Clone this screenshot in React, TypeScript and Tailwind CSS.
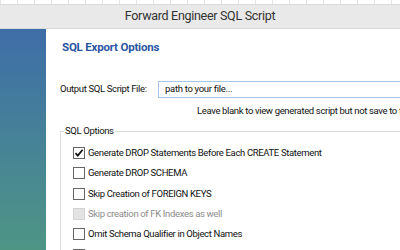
import React from 'react';

const font = { fontFamily: 'Roboto, "Noto Sans", sans-serif' };

const options = [
  { label: 'Generate DROP Statements Before Each CREATE Statement', checked: true },
  { label: 'Generate DROP SCHEMA' },
  { label: 'Skip Creation of FOREIGN KEYS' },
  { label: 'Skip creation of FK Indexes as well', disabled: true },
  { label: 'Omit Schema Qualifier in Object Names' },
  { label: 'Generate USE statements' },
];

const CheckRow = ({ label, checked, disabled }: { label: string; checked?: boolean; disabled?: boolean }) => (
  <div className="flex items-center h-[20.3px] gap-[3px]">
    <div
      className={
        disabled
          ? 'w-[12px] h-[12px] border border-[#d4d4d4] bg-[#e3e3e3] flex items-center justify-center'
          : 'w-[12px] h-[12px] border border-[#666] bg-white flex items-center justify-center'
      }
    >
      {checked && (
        <svg width="10" height="10" viewBox="0 0 10 10">
          <path d="M1.5 5.2 L3.8 7.6 L8.6 1.8" stroke="#111" strokeWidth="1.7" fill="none" />
        </svg>
      )}
    </div>
    <span
      className={
        disabled
          ? 'text-[9.5px] tracking-[-0.35px] text-[#8c8c8c] whitespace-nowrap'
          : 'text-[9.5px] tracking-[-0.35px] text-[#111] whitespace-nowrap'
      }
    >
      {label}
    </span>
  </div>
);

export default function App() {
  return (
    <div className="w-[400px] h-[250px] overflow-hidden flex flex-col bg-white" style={font}>
      {/* ruler-ish strip at very top */}
      <div className="h-[4px] bg-white bg-[repeating-linear-gradient(90deg,#e4e4e4_0px,#e4e4e4_1px,transparent_1px,transparent_17px)]" />
      <div className="h-[25px] bg-[#e9e9e9] border-t border-b border-[#d8d8d8] flex items-center justify-center">
        <span className="text-[12.5px] tracking-[-0.3px] text-[#333] leading-none">Forward Engineer SQL Script</span>
      </div>
      <div className="flex-1 flex min-h-0">
        <div className="w-[46px] bg-gradient-to-b from-[#3f6da7] to-[#4f9584]" />
        <div className="flex-1 pl-[14px] pt-[10px] min-w-0">
          <div className="pl-[2px] text-[11.5px] tracking-[-0.2px] leading-[16px] font-bold text-[#2a55a3]">SQL Export Options</div>
          <div className="mt-[26px] flex items-center h-[17px]">
            <span className="w-[98px] shrink-0 text-[9.5px] tracking-[-0.35px] text-[#111] whitespace-nowrap">Output SQL Script File:</span>
            <div className="w-[260px] h-[17px] border border-[#a9c5e8] flex items-center px-[6px] shrink-0">
              <span className="text-[9.5px] tracking-[-0.3px] text-[#111] whitespace-nowrap">path to your file...</span>
            </div>
          </div>
          <div className="mt-[6px] pl-[137px] text-[9.5px] tracking-[-0.35px] leading-[14px] text-[#111] whitespace-nowrap">
            Leave blank to view generated script but not save to file
          </div>
          <fieldset className="mt-[6px] w-[400px] border border-[#dcdcdc] pl-[12px] pt-[5px]">
            <legend className="ml-[-9px] px-[1px] text-[9.5px] tracking-[-0.35px] leading-[14px] text-[#111]">SQL Options</legend>
            {options.map((o) => (
              <CheckRow key={o.label} {...o} />
            ))}
          </fieldset>
        </div>
      </div>
    </div>
  );
}
